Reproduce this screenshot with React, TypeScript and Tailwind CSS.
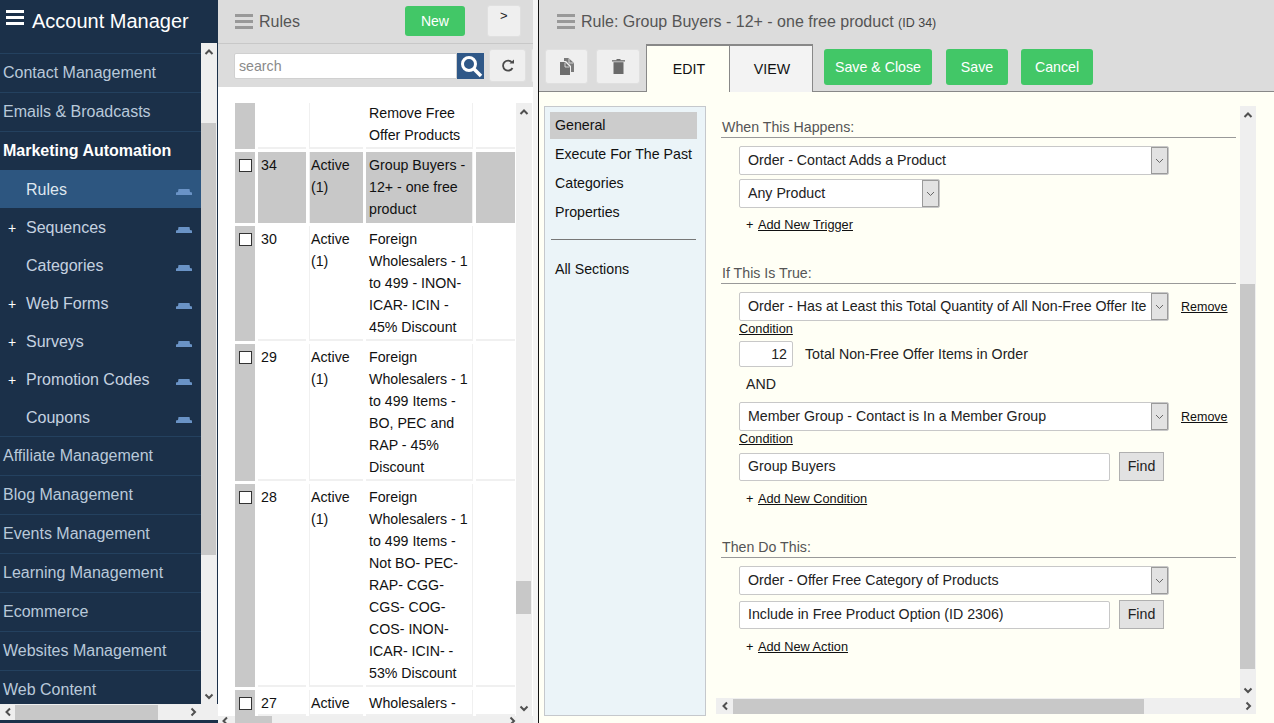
import React from "react";

const Chev = ({ dir }: { dir: "up" | "down" | "left" | "right" }) => {
  const p: Record<string, string> = {
    up: "M1.5 7 L5 3.5 L8.5 7",
    down: "M1.5 3.5 L5 7 L8.5 3.5",
    left: "M7 1.5 L3.5 5 L7 8.5",
    right: "M3.5 1.5 L7 5 L3.5 8.5",
  };
  return (
    <svg width="10" height="10" viewBox="0 0 10 10" className="shrink-0">
      <path d={p[dir]} fill="none" stroke="#505050" strokeWidth="2" />
    </svg>
  );
};

const VBar = ({ before, thumb }: { before: string; thumb: string }) => (
  <div className="w-[16px] h-full shrink-0 bg-[#efefef] flex flex-col items-center">
    <div className="h-[17px] w-full shrink-0 flex items-center justify-center"><Chev dir="up" /></div>
    <div className={`${before} w-full shrink-0`} />
    <div className={`${thumb} w-[15px] shrink-0 bg-[#c8c8c8] mr-px`} />
    <div className="w-full grow" />
    <div className="h-[17px] w-full shrink-0 flex items-center justify-center"><Chev dir="down" /></div>
  </div>
);

const HBar = ({ thumb, cls, lead = "w-[17px]" }: { thumb: string; cls: string; lead?: string }) => (
  <div className={`${cls} h-[16px] shrink-0 bg-[#efefef] flex items-center`}>
    <div className={`${lead} h-full shrink-0 flex items-center justify-center`}><Chev dir="left" /></div>
    <div className={`${thumb} h-[15px] shrink-0 bg-[#c8c8c8]`} />
    <div className="grow" />
    <div className="w-[17px] h-full shrink-0 flex items-center justify-center"><Chev dir="right" /></div>
  </div>
);

const Bars = ({ color }: { color: string }) => (
  <svg width="18" height="15" viewBox="0 0 18 15" className="shrink-0">
    <rect x="0" y="0" width="18" height="3" fill={color} />
    <rect x="0" y="6" width="18" height="3" fill={color} />
    <rect x="0" y="12" width="18" height="3" fill={color} />
  </svg>
);

const Trap = () => (
  <svg width="16" height="6" viewBox="0 0 16 6" className="shrink-0 mt-[4px]">
    <path d="M2.5 0 H13.5 L14 3 L16 3.5 V6 H0 V3.5 L2 3 Z" fill="#6a93c6" />
  </svg>
);

const TOP1 = ["Contact Management", "Emails & Broadcasts"];
const SUB = [
  ["Rules", false],
  ["Sequences", true],
  ["Categories", false],
  ["Web Forms", true],
  ["Surveys", true],
  ["Promotion Codes", true],
  ["Coupons", false],
] as [string, boolean][];
const TOP2 = ["Affiliate Management", "Blog Management", "Events Management", "Learning Management", "Ecommerce", "Websites Management", "Web Content"];

const Sidebar = () => (
  <div className="w-[218px] h-full shrink-0 bg-[#1b3049] flex flex-col">
    <div className="h-[43px] shrink-0 flex items-start pl-[6px] pt-[10px] gap-[8px] text-white text-[20px] leading-[22px]">
      <Bars color="#ffffff" />
      <span>Account Manager</span>
    </div>
    <div className="flex h-[661px] shrink-0">
      <div className="w-[201px] shrink-0 overflow-hidden pt-[10px]">
        {TOP1.map((t) => (
          <div key={t} className="h-[39px] border-t border-[#24415f] pl-[3px] flex items-center text-[16px] text-[#b9c9da]">{t}</div>
        ))}
        <div className="h-[39px] border-t border-[#24415f] pl-[3px] flex items-center text-[16px] font-bold text-white">Marketing Automation</div>
        {SUB.map(([t, plus], i) => (
          <div key={t} className={`h-[38px] pt-[2px] flex items-center text-[16px] pr-[9px] ${i === 0 ? "bg-[#2d5680] text-[#dfe7ef]" : "text-[#c5d2e0]"}`}>
            <span className="w-[26px] shrink-0 pl-[8px] text-[14px] text-white">{plus ? "+" : ""}</span>
            <span className="grow">{t}</span>
            <Trap />
          </div>
        ))}
        {TOP2.map((t) => (
          <div key={t} className="h-[39px] border-t border-[#24415f] pl-[3px] flex items-center text-[16px] text-[#b9c9da]">{t}</div>
        ))}
      </div>
      <VBar before="h-[63px]" thumb="h-[432px]" />
    </div>
    <div className="w-[218px] h-[16px] shrink-0 bg-[#efefef]">
      <HBar thumb="w-[143px]" cls="w-[201px]" lead="w-[15px]" />
    </div>
    <div className="grow" />
  </div>
);

type Row = { id: string; status: string[]; name: string[]; h: string; sel?: boolean; first?: boolean };
const A = ["Active", "(1)"];
const ROWS: Row[] = [
  { id: "", status: [], name: ["Remove Free", "Offer Products"], h: "h-[46px]", first: true },
  { id: "34", status: A, name: ["Group Buyers -", "12+ - one free", "product"], h: "h-[71px]", sel: true },
  { id: "30", status: A, name: ["Foreign", "Wholesalers - 1", "to 499 - INON-", "ICAR- ICIN -", "45% Discount"], h: "h-[115px]" },
  { id: "29", status: A, name: ["Foreign", "Wholesalers - 1", "to 499 Items -", "BO, PEC and", "RAP - 45%", "Discount"], h: "h-[137px]" },
  { id: "28", status: A, name: ["Foreign", "Wholesalers - 1", "to 499 Items -", "Not BO- PEC-", "RAP- CGG-", "CGS- COG-", "COS- INON-", "ICAR- ICIN- -", "53% Discount"], h: "h-[203px]" },
  { id: "27", status: ["Active"], name: ["Wholesalers -"], h: "h-[26px]" },
];

const TableRow = ({ r }: { r: Row }) => {
  const cell = r.sel ? "bg-[#c8c8c8]" : "bg-white";
  const bottom = r.sel ? "" : "border-b-2 border-[#f0f0f0]";
  return (
    <div className={`${r.h} shrink-0 flex gap-[3px] text-[14.2px] leading-[22px] text-[#111] mb-[3px] overflow-hidden`}>
      <div className="w-[20px] shrink-0 bg-[#c8c8c8] pl-[4px] pt-[7px]">
        {r.first ? null : <div className="w-[13px] h-[13px] bg-white border border-[#333]" />}
      </div>
      <div className={`w-[48px] shrink-0 pl-[3px] pt-[2px] ${cell} ${bottom}`}>{r.id}</div>
      <div className={`w-[54px] shrink-0 pl-[1px] pt-[2px] border-l border-[#f0f0f0] ${cell} ${bottom}`}>
        {r.status.map((s) => <div key={s}>{s}</div>)}
      </div>
      <div className={`w-[107px] shrink-0 pl-[3px] ${r.first ? "-mt-[1px]" : "pt-[2px]"} border-r border-[#f0f0f0] ${cell} ${bottom}`}>
        {r.name.map((n) => <div key={n} className="whitespace-nowrap">{n}</div>)}
      </div>
      <div className={`w-[39px] shrink-0 ${cell} ${bottom}`} />
    </div>
  );
};

const Middle = () => (
  <div className="w-[315px] h-full shrink-0 flex flex-col bg-white">
    <div className="h-[44px] shrink-0 bg-[#dcdcdc] border-b border-[#c8c8c8] flex items-start pl-[17px]">
      <div className="pt-[14px]"><Bars color="#999999" /></div>
      <span className="ml-[6px] mt-[12px] text-[16px] leading-[20px] text-[#555]">Rules</span>
      <div className="ml-[105px] mt-[6px] w-[60px] h-[30px] rounded-[3px] bg-[#42c767] text-white text-[14px] flex items-center justify-center">New</div>
      <div className="ml-[22px] mt-[5px] w-[34px] h-[32px] rounded-[3px] bg-[#efefef] border border-[#e0e0e0] text-[#222] text-[13px] leading-[18px] flex items-start justify-center pt-[1px]">&gt;</div>
    </div>
    <div className="h-[43px] shrink-0 bg-[#dcdcdc] flex items-start pl-[16px] pt-[9px]">
      <div className="w-[223px] h-[26px] bg-white rounded-l-[2px] border border-[#d0d0d0] pl-[4px] text-[14.2px] leading-[24px] text-[#8a8a8a]">search</div>
      <div className="w-[27px] h-[26px] bg-[#2f5888] flex items-center justify-center">
        <svg width="24" height="24" viewBox="0 0 24 24">
          <circle cx="10" cy="10" r="6.5" fill="none" stroke="#fff" strokeWidth="3" />
          <path d="M15 15 L22 22" stroke="#fff" strokeWidth="3.5" />
        </svg>
      </div>
      <div className="ml-[5px] -mt-[4px] w-[37px] h-[33px] rounded-[3px] bg-[#efefef] border border-[#e0e0e0] flex items-center justify-center">
        <svg width="14" height="14" viewBox="0 0 14 14">
          <path d="M11 3.5 A5 5 0 1 0 11.5 9" fill="none" stroke="#4a4a4a" strokeWidth="1.8" />
          <path d="M8.5 4.5 H13 V0.5 Z" fill="#4a4a4a" />
        </svg>
      </div>
      <div className="ml-[5px] -mt-[4px] w-[2px] h-[33px] rounded-l-[2px] bg-[#efefef] border-l border-[#e0e0e0]" />
    </div>
    <div className="grow flex flex-col pl-[17px] pt-[16px] min-h-0">
      <div className="flex h-[613px] shrink-0">
        <div className="w-[281px] shrink-0 overflow-hidden flex flex-col">
          {ROWS.map((r, i) => <TableRow key={i} r={r} />)}
        </div>
        <VBar before="h-[461px]" thumb="h-[33px]" />
      </div>
    </div>
    <div className="h-[7px] shrink-0 bg-[#efefef] overflow-hidden flex items-start pl-[2px]">
      <div className="w-[15px] h-[7px] overflow-hidden"><Chev dir="left" /></div>
      <div className="w-[37px] h-[7px] bg-[#c8c8c8]" />
      <div className="grow" />
      <div className="w-[26px] h-[7px] overflow-hidden"><Chev dir="right" /></div>
    </div>
  </div>
);

const Select = ({ w, children }: { w: string; children: React.ReactNode }) => (
  <div className={`${w} h-[29px] shrink-0 bg-white border border-[#c8c8c8] rounded-[2px] flex items-stretch text-[14.2px] text-[#222] overflow-hidden`}>
    <div className="grow pl-[8px] leading-[27px] whitespace-nowrap overflow-hidden">{children}</div>
    <div className="w-[17px] shrink-0 bg-[#e2e2e2] border border-[#9a9a9a] flex items-center justify-center">
      <svg width="9" height="6" viewBox="0 0 9 6"><path d="M1 1 L4.5 4.5 L8 1" fill="none" stroke="#666" strokeWidth="1" /></svg>
    </div>
  </div>
);

const TextBox = ({ w, children }: { w: string; children: React.ReactNode }) => (
  <div className={`${w} shrink-0 bg-white border border-[#c8c8c8] rounded-[2px] pl-[8px] text-[14.2px] leading-[25px] text-[#222] whitespace-nowrap`}>{children}</div>
);

const Find = () => (
  <div className="w-[45px] h-[29px] shrink-0 bg-[#e2e2e2] border border-[#b0b0b0] text-[14.2px] text-[#222] flex items-center justify-center ml-[9px]">Find</div>
);

const Add = ({ t, cls }: { t: string; cls: string }) => (
  <div className={`${cls} ml-[7px] text-[12.75px] leading-[18px] text-[#111]`}>
    + <span className="underline ml-[1px]">{t}</span>
  </div>
);

const Heading = ({ t, cls }: { t: string; cls: string }) => (
  <div className={`${cls} w-[515px] h-[20px] -ml-[18px] pl-px border-b border-[#999] text-[14.2px] leading-[18px] text-[#555]`}>{t}</div>
);

const Remove = () => <span className="underline text-[12.5px] text-[#111] ml-[12px] mt-[1px] whitespace-nowrap">Remove</span>;
const Cond = ({ cls }: { cls: string }) => <div className={`${cls} underline text-[12.75px] leading-[14px] text-[#111]`}>Condition</div>;

const GREEN = "mt-[5px] pt-px h-[36px] rounded-[3px] bg-[#42c767] text-white text-[14.2px] flex items-center justify-center";

const Detail = () => (
  <div className="grow h-full flex flex-col min-w-0">
    <div className="h-[44px] shrink-0 bg-[#dcdcdc] flex items-start pl-[18px] text-[#555]">
      <div className="pt-[14px]"><Bars color="#999999" /></div>
      <span className="ml-[6px] mt-[12px] text-[16px] leading-[20px] whitespace-nowrap">Rule: Group Buyers - 12+ - one free product <span className="text-[12.5px] text-[#444]">(ID 34)</span></span>
    </div>
    <div className="h-[48px] shrink-0 bg-[#dcdcdc] border-b border-[#888] flex items-start pl-[6px]">
      <div className="mt-[5px] w-[43px] h-[35px] rounded-[3px] bg-[#efefef] border border-[#e0e0e0] flex items-center justify-center">
        <svg width="14" height="17" viewBox="0 0 14 17">
          <path d="M4 0 H8.5 L14 5 V14 H11 V8 L6 3 H4 Z" fill="#7a7a7a" />
          <path d="M9 0.5 V5 H13.5" fill="none" stroke="#efefef" strokeWidth="0.8" />
          <path d="M0 4 H5 L10 9 V17 H0 Z" fill="#6e6e6e" />
          <path d="M5 4.5 V9 H9.5" fill="none" stroke="#efefef" strokeWidth="0.8" />
        </svg>
      </div>
      <div className="ml-[8px] mt-[5px] w-[44px] h-[35px] rounded-[3px] bg-[#efefef] border border-[#e0e0e0] flex items-center justify-center">
        <svg width="13" height="15" viewBox="0 0 13 15">
          <rect x="0" y="1.2" width="13" height="1.3" fill="#6a6a6a" />
          <rect x="4.5" y="0" width="4" height="1.5" fill="#6a6a6a" />
          <rect x="1.5" y="3.2" width="10" height="11.8" fill="#6a6a6a" />
        </svg>
      </div>
      <div className="ml-[6px] pl-[2px] pt-[2px] h-[48px] w-[84px] bg-[#fffff5] border-t-2 border-x border-[#888] text-[14.2px] text-[#111] flex items-center justify-center">EDIT</div>
      <div className="pl-[2px] pt-[2px] h-[48px] w-[83px] bg-[#f3f3f3] border-t-2 border-r border-[#888] text-[14.2px] text-[#111] flex items-center justify-center">VIEW</div>
      <div className={`ml-[11px] w-[108px] ${GREEN}`}>Save &amp; Close</div>
      <div className={`ml-[14px] w-[62px] ${GREEN}`}>Save</div>
      <div className={`ml-[13px] w-[72px] ${GREEN}`}>Cancel</div>
    </div>
    <div className="grow bg-[#fffff5] flex items-start pl-[5px] pt-[14px] min-h-0">
      <div className="w-[162px] h-[610px] shrink-0 bg-[#ebf4f8] border border-[#c5c8cc] p-[5px] text-[14.2px] text-[#111]">
        <div className="h-[27px] w-[147px] bg-[#cccccc] pl-[5px] leading-[26px]">General</div>
        <div className="h-[29px] pl-[5px] leading-[30px] whitespace-nowrap">Execute For The Past</div>
        <div className="h-[29px] pl-[5px] leading-[30px]">Categories</div>
        <div className="h-[29px] pl-[5px] leading-[30px]">Properties</div>
        <div className="ml-[1px] mt-[13px] h-px w-[145px] bg-[#777]" />
        <div className="pl-[5px] mt-[14px] leading-[30px]">All Sections</div>
      </div>
      <div className="w-[540px] ml-[10px] h-[608px] shrink-0 flex flex-col">
        <div className="flex h-[592px] shrink-0">
          <div className="w-[524px] shrink-0 overflow-hidden pl-[23px] pt-[12px] flex flex-col items-start">
            <Heading t="When This Happens:" cls="" />
            <Select w="w-[430px] mt-[8px]">Order - Contact Adds a Product</Select>
            <Select w="w-[201px] mt-[4px]">Any Product</Select>
            <Add t="Add New Trigger" cls="mt-[8px]" />
            <Heading t="If This Is True:" cls="mt-[30px]" />
            <div className="flex items-center mt-[8px]">
              <Select w="w-[430px]">Order - Has at Least this Total Quantity of All Non-Free Offer Ite</Select>
              <Remove />
            </div>
            <Cond cls="mt-[1px]" />
            <div className="flex items-center mt-[5px] text-[14.2px] text-[#222]">
              <div className="w-[54px] h-[26px] bg-white border border-[#c8c8c8] rounded-[2px] text-right pr-[5px] leading-[24px]">12</div>
              <span className="ml-[12px] pt-[2px]">Total Non-Free Offer Items in Order</span>
            </div>
            <div className="ml-[7px] mt-[7px] text-[14.2px] leading-[20px] text-[#222]">AND</div>
            <div className="flex items-center mt-[8px]">
              <Select w="w-[430px]">Member Group - Contact is In a Member Group</Select>
              <Remove />
            </div>
            <Cond cls="mt-[1px]" />
            <div className="flex items-center mt-[6px]">
              <TextBox w="w-[371px] h-[28px]">Group Buyers</TextBox>
              <Find />
            </div>
            <Add t="Add New Condition" cls="mt-[9px]" />
            <Heading t="Then Do This:" cls="mt-[30px]" />
            <Select w="w-[430px] mt-[8px]">Order - Offer Free Category of Products</Select>
            <div className="flex items-center mt-[5px]">
              <TextBox w="w-[371px] h-[28px]">Include in Free Product Option (ID 2306)</TextBox>
              <Find />
            </div>
            <Add t="Add New Action" cls="mt-[9px]" />
          </div>
          <VBar before="h-[161px]" thumb="h-[385px]" />
        </div>
        <HBar thumb="w-[411px]" cls="w-[540px]" />
      </div>
    </div>
  </div>
);

export default function App() {
  return (
    <div className="w-[1274px] h-[723px] overflow-hidden flex bg-white" style={{ fontFamily: '"Liberation Sans", Arial, sans-serif' }}>
      <Sidebar />
      <Middle />
      <div className="w-[5px] shrink-0 h-full bg-[#f4f4f4]" />
      <div className="w-px shrink-0 h-full bg-[#111]" />
      <Detail />
    </div>
  );
}
